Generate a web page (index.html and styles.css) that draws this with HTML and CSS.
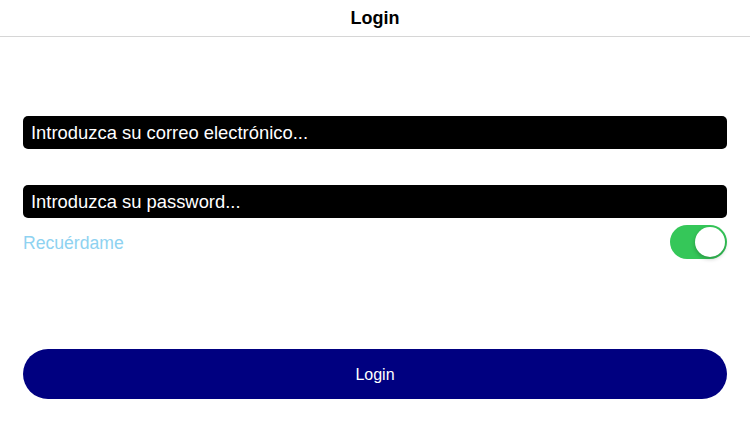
FILE: index.html
```html
<!DOCTYPE html>
<html lang="es">
<head>
    <meta charset="UTF-8">
    <meta name="viewport" content="width=device-width, initial-scale=1.0">
    <title>Login</title>
    <link rel="stylesheet" href="styles.css">
</head>
<body>

<header class="nav-bar">
    <h1>Login</h1>
</header>

<form class="login-form">
    <input class="field email-field" type="email" placeholder="Introduzca su correo electrónico...">
    <input class="field password-field" type="password" placeholder="Introduzca su password...">

    <div class="remember-row">
        <label for="rememberSwitch">Recuérdame</label>
        <label class="switch">
            <input type="checkbox" id="rememberSwitch" checked>
            <span class="slider"></span>
        </label>
    </div>

    <button type="submit" class="login-button">Login</button>
</form>

</body>
</html>
```

FILE: styles.css
```css
body {
    font-family: "Liberation Sans", Arial, sans-serif;
    background-color: white;
    margin: 0;
    padding: 0;
    color: #000;
}

.nav-bar {
    height: 36px;
    border-bottom: 1px solid #d6d6d6;
    display: flex;
    align-items: center;
    justify-content: center;
}

.nav-bar h1 {
    margin: 0;
    font-size: 18px;
    font-weight: bold;
}

.login-form {
    display: flex;
    flex-direction: column;
    padding: 79px 23px 0 23px;
}

.field {
    height: 33px;
    box-sizing: border-box;
    background-color: #000;
    border: none;
    border-radius: 5px;
    padding: 0 8px;
    font-family: inherit;
    font-size: 18.4px;
    color: white;
    outline: none;
}

.field::placeholder {
    color: white;
    opacity: 1;
}

.password-field {
    margin-top: 36px;
}

.remember-row {
    display: flex;
    align-items: center;
    justify-content: space-between;
    margin-top: 7px;
    height: 34px;
}

.remember-row > label:first-child {
    color: #8ed2f1;
    font-size: 17.6px;
    padding-top: 2px;
}

.switch {
    position: relative;
    width: 57px;
    height: 34px;
}

.switch input {
    display: none;
}

.slider {
    position: absolute;
    inset: 0;
    background-color: #35c759;
    border-radius: 17px;
    cursor: pointer;
}

.slider::before {
    content: "";
    position: absolute;
    width: 30px;
    height: 30px;
    top: 2px;
    left: 2px;
    background-color: white;
    border-radius: 50%;
    box-shadow: 0 2px 4px rgba(0, 0, 0, 0.25);
}

.switch input:checked + .slider::before {
    left: 25px;
}

.login-button {
    margin-top: 90px;
    height: 50px;
    padding-top: 3px;
    background-color: #000080;
    color: white;
    border: none;
    border-radius: 25px;
    font-family: inherit;
    font-size: 16px;
    cursor: pointer;
}
```
